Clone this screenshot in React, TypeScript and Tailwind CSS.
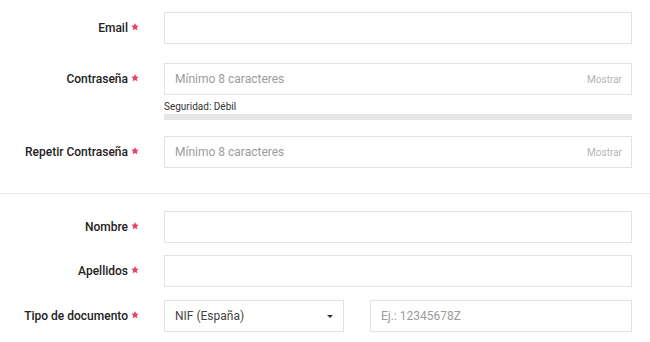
import React from "react";

function Star() {
  return (
    <svg width="8" height="8" viewBox="0 0 8 8" className="ml-[3px] mb-[3px] shrink-0">
      <polygon
        points="4,0 5.12,2.46 7.8,2.76 5.81,4.59 6.35,7.24 4,5.9 1.65,7.24 2.19,4.59 0.2,2.76 2.88,2.46"
        fill="#e8416a"
      />
    </svg>
  );
}

function Label({ text }: { text: string }) {
  return (
    <div className="w-[164px] h-8 pr-[25px] flex items-center justify-end shrink-0">
      <span className="text-[12px] font-medium text-[#222]">{text}</span>
      <Star />
    </div>
  );
}

function Field({ placeholder, action }: { placeholder?: string; action?: string }) {
  return (
    <div className="h-8 w-full border border-[#e3e3e3] flex items-center pl-[10px] pr-[9px]">
      <span className="flex-1 text-[12px] text-[#9c9c9c]">{placeholder}</span>
      {action && <span className="text-[10px] text-[#b5b5b5]">{action}</span>}
    </div>
  );
}

export default function App() {
  return (
    <div className="w-[650px] h-[342px] bg-white font-['Roboto',sans-serif] pt-3">
      <div className="flex items-start">
        <Label text="Email" />
        <div className="w-[468px]">
          <Field />
        </div>
      </div>

      <div className="flex items-start mt-[19px]">
        <Label text="Contraseña" />
        <div className="w-[468px]">
          <Field placeholder="Mínimo 8 caracteres" action="Mostrar" />
          <div className="mt-[6px] text-[10px] leading-[12px] text-[#333]">Seguridad: Débil</div>
          <div className="mt-[1px] h-[6px] bg-[#e6e6e6]" />
        </div>
      </div>

      <div className="flex items-start mt-[16px]">
        <Label text="Repetir Contraseña" />
        <div className="w-[468px]">
          <Field placeholder="Mínimo 8 caracteres" action="Mostrar" />
        </div>
      </div>

      <div className="mt-[25px] h-px bg-[#e8e8e8]" />

      <div className="flex items-start mt-[17px]">
        <Label text="Nombre" />
        <div className="w-[468px]">
          <Field />
        </div>
      </div>

      <div className="flex items-start mt-[12px]">
        <Label text="Apellidos" />
        <div className="w-[468px]">
          <Field />
        </div>
      </div>

      <div className="flex items-start mt-[13px]">
        <Label text="Tipo de documento" />
        <div className="w-[468px] flex gap-[26px]">
          <div className="h-8 w-[180px] shrink-0 border border-[#e3e3e3] flex items-center pl-[10px] pr-[10px]">
            <span className="flex-1 text-[12px] text-[#444]">NIF (España)</span>
            <svg width="6" height="3" viewBox="0 0 6 3" className="mt-[1px]">
              <path d="M0 0 L6 0 L3 3 Z" fill="#333" />
            </svg>
          </div>
          <div className="flex-1">
            <Field placeholder="Ej.: 12345678Z" />
          </div>
        </div>
      </div>
    </div>
  );
}
